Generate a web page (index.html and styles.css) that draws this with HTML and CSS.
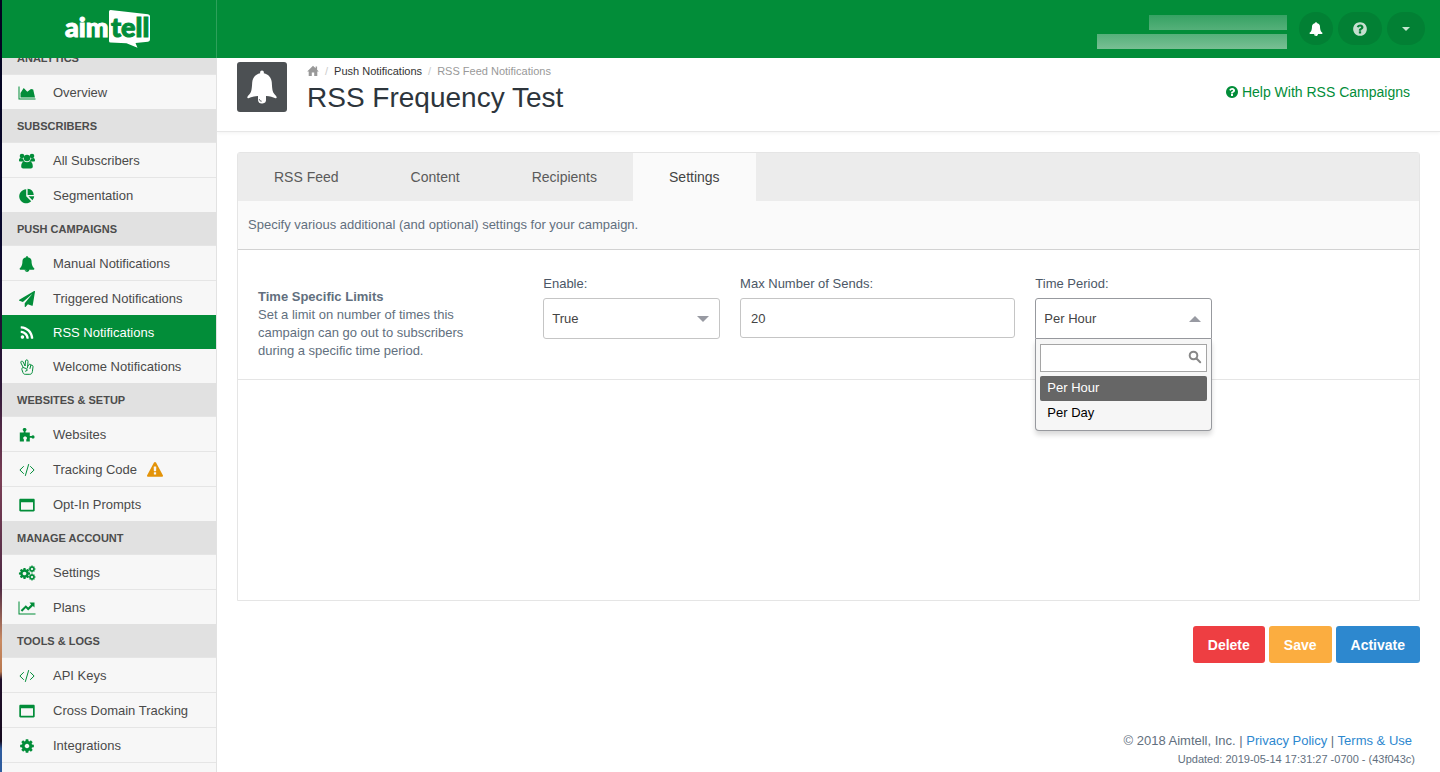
FILE: index.html
```html
<!DOCTYPE html>
<html lang="en">
<head>
<meta charset="utf-8">
<title>RSS Frequency Test - Aimtell</title>
<link rel="stylesheet" href="styles.css">
</head>
<body>
<svg class="sprite" aria-hidden="true">
  <symbol id="bell" viewBox="0 0 1792 1792"><path d="M912 1696q0-16-16-16-59 0-101.500-42.500t-42.500-101.500q0-16-16-16t-16 16q0 73 51.500 124.500t124.500 51.500q16 0 16-16zm816-288q0 52-38 90t-90 38h-448q0 106-75 181t-181 75-181-75-75-181h-448q-52 0-90-38t-38-90q50-42 91-88t85-119.500 74.500-158.500 50-206 19.500-260q0-152 117-282.500t307-158.500q-8-19-8-39 0-40 28-68t68-28 68 28 28 68q0 20-8 39 190 28 307 158.500t117 282.500q0 139 19.500 260t50 206 74.500 158.500 85 119.500 91 88z"/></symbol>
  <symbol id="bell-tall" viewBox="0 0 32 34"><path d="M16 .5c1.100 0 1.900.8 1.900 1.900l-.1.800c4.700.9 7.700 4.400 8 9.300.3 5.600.6 8.600 2 10.800 1.200 1.900 2.900 2.900 2.900 4.300 0 .5-.5.900-1.200.6-2.700-1.200-5.500-1.900-9.200-2.200-1.300 0-1.900.6-2.200 1.200-.7-1-3.500-1-4.200 0-.3-.6-.9-1.200-2.200-1.200-3.700.3-6.500 1-9.200 2.200-.7.300-1.200-.1-1.200-.6 0-1.400 1.700-2.400 2.900-4.300 1.400-2.200 1.700-5.200 2-10.800.3-4.900 3.300-8.400 8-9.300l-.1-.8C14.100 1.300 14.900.5 16 .5z"/><path d="M12 26h8v3a4 4 0 0 1-8 1z"/><path class="notch" d="M13.300 29.200c.2 1.300 1.100 2 2.300 2"/></symbol>
  <symbol id="rss" viewBox="0 0 1792 1792"><path d="M576 1344q0 80-56 136t-136 56-136-56-56-136 56-136 136-56 136 56 56 136zm512 123q2 28-17 48-18 21-47 21h-135q-25 0-43-16.500t-20-41.500q-22-229-184.500-391.500t-391.500-184.500q-25-2-41.500-20t-16.500-43v-135q0-29 21-47 17-17 43-17h5q160 13 306 80.500t259 181.500q114 113 181.500 259t80.500 306zm512 2q2 27-18 47-18 20-46 20h-143q-26 0-44.500-17.500t-19.500-42.500q-12-215-101-408.500t-231.500-336-336-231.500-408.500-102q-25-1-42.500-19.500t-17.500-43.500v-143q0-28 20-46 18-18 44-18h3q262 13 501.500 120t425.500 294q187 186 294 425.500t120 501.500z"/></symbol>
  <symbol id="help" viewBox="0 0 1792 1792"><path d="M1024 1376v-192q0-14-9-23t-23-9h-192q-14 0-23 9t-9 23v192q0 14 9 23t23 9h192q14 0 23-9t9-23zm256-672q0-88-55.500-163t-138.500-116-170-41q-243 0-371 213-15 24 8 42l132 100q7 6 19 6 16 0 25-12 53-68 86-92 34-24 86-24 48 0 85.500 26t37.500 59q0 38-20 61t-68 45q-63 28-115.500 86.500t-52.500 125.500v36q0 14 9 23t23 9h192q14 0 23-9t9-23q0-19 21.500-49.500t54.500-49.500q32-18 49-28.500t46-35 44.500-48 28-60.500 12.500-81zm384 192q0 209-103 385.500t-279.500 279.500-385.500 103-385.500-103-279.500-279.500-103-385.500 103-385.500 279.500-279.500 385.500-103 385.500 103 279.500 279.500 103 385.500z"/></symbol>
  <symbol id="warning" viewBox="0 0 1792 1792"><path d="M1024 1375v-190q0-14-9.500-23.500t-22.500-9.500h-192q-13 0-22.500 9.500t-9.500 23.500v190q0 14 9.500 23.500t22.500 9.500h192q13 0 22.500-9.500t9.500-23.500zm-2-374l18-459q0-12-10-19-13-11-24-11h-220q-11 0-24 11-10 7-10 21l17 457q0 10 10 16.500t24 6.500h185q14 0 23.500-6.500t10.500-16.500zm-14-934l768 1408q35 63-2 126-17 29-46.500 46t-63.500 17h-1536q-34 0-63.500-17t-46.500-46q-37-63-2-126l768-1408q17-31 47-49t65-18 65 18 47 49z"/></symbol>
  <symbol id="cog" viewBox="0 0 1792 1792"><path d="M1152 896q0-106-75-181t-181-75-181 75-75 181 75 181 181 75 181-75 75-181zm512-109v222q0 12-8 23t-20 13l-185 28q-19 54-39 91 35 50 107 138 10 12 10 25t-9 23q-27 37-99 108t-94 71q-12 0-26-9l-138-108q-44 23-91 38-16 136-29 186-7 28-36 28h-222q-14 0-24.500-8.500t-11.500-21.500l-28-184q-49-16-90-37l-141 107q-10 9-25 9-14 0-25-11-126-114-165-168-7-10-7-23 0-12 8-23 15-21 51-66.500t54-70.500q-27-50-41-99l-183-27q-13-2-21-12.500t-8-23.500v-222q0-12 8-23t19-13l186-28q14-46 39-92-40-57-107-138-10-12-10-24 0-10 9-23 26-36 98.500-107.500t94.500-71.500q13 0 26 10l138 107q44-23 91-38 16-136 29-186 7-28 36-28h222q14 0 24.500 8.500t11.500 21.500l28 184q49 16 90 37l142-107q9-9 24-9 13 0 25 10 129 119 165 170 7 8 7 22 0 12-8 23-15 21-51 66.500t-54 70.500q26 50 41 98l183 28q13 2 21 12.500t8 23.500z"/></symbol>
  <symbol id="plane" viewBox="0 0 1792 1792"><path d="M1764 11q33 24 27 64l-256 1536q-5 29-32 45-14 8-31 8-11 0-24-5l-453-185-242 295q-18 23-49 23-13 0-22-4-19-7-30.500-23.500t-11.500-36.500v-349l864-1059-1069 925-395-162q-37-14-40-55-2-40 32-59l1664-960q15-9 32-9 20 0 36 11z"/></symbol>
  <symbol id="search" viewBox="0 0 14 14"><circle class="stroke stroke-2" cx="5.500" cy="5.500" r="3.800"/><path class="stroke stroke-2" d="M8.500 8.500l3.700 3.700"/></symbol>
  <symbol id="area" viewBox="0 0 18 16"><path d="M.5 1.500h1v12h16v1H.5zM2.500 12.500V8l3.200-5 3.600 3.700L13 4l2.200.5 1.800 8z"/></symbol>
  <symbol id="line" viewBox="0 0 18 16"><path d="M.5 1.500h1v12h16v1H.5z"/><path d="M11.500 2.500h5v5l-1.600-1.600-4.700 4.600-2.400-2.400-3.600 3.700-1.500-1.500 5.100-5.100 2.400 2.400 2.900-3.200z"/></symbol>
  <symbol id="users" viewBox="0 0 16 16"><circle cx="3" cy="3" r="2.300"/><circle cx="13" cy="3" r="2.300"/><circle cx="8" cy="5" r="3.200"/><path d="M0 7.500C0 6 .6 5 1.500 5l2.700.6c.1 1.200.5 2 1.300 2.900H1.200C.4 8.500 0 8.200 0 7.500zM16 7.500C16 6 15.400 5 14.500 5l-2.700.6c-.1 1.200-.5 2-1.300 2.900h4.300c.8 0 1.200-.3 1.200-1zM2.200 13.500c0-2.900.9-5 3.300-5 1.600 1 3.400 1 5 0 2.400 0 3.300 2.100 3.300 5 0 1.300-.8 2-2 2H4.200c-1.200 0-2-.7-2-2z"/></symbol>
  <symbol id="pie" viewBox="0 0 16 16"><path d="M7.200 1.300v7l5 4.900A7 7 0 1 1 7.200 1.300z"/><path d="M8.600.8a6.800 6.800 0 0 1 6.200 6.200H8.600zM9.500 8.200h5.700a6.500 6.500 0 0 1-1.800 4z"/></symbol>
  <symbol id="peace" viewBox="0 0 16 16"><path class="stroke" d="M4.300 8.600L1.900 3.900C1.300 2.200 3.400 1.400 4.100 2.900l2 4.100L6.500 1.900c.2-1.500 2.600-1.300 2.500.3l-.3 5.100 1.500-1.900c.8-.5 1.700 0 1.700.8 1.400-.3 2.300.5 2.100 1.700L13.400 12.500c-.3 1.900-1.100 2.800-2.600 2.800H6.200c-1.200 0-1.900-.7-2.200-1.600L2.900 10.600C2.600 9.300 3.200 8.600 4.300 8.600l3.100 1 .9 1.700-1.800.9M8.700 7.300l-.4 1.800M11.800 6.300l-.8 3.200"/></symbol>
  <symbol id="puzzle" viewBox="0 0 16 16"><path d="M.8 5.500h3.900V4.200C4 3.700 3.700 3.200 3.700 2.500 3.700 1.500 4.500.9 5.600.9s1.900.6 1.900 1.600c0 .7-.3 1.200-1 1.700v1.300h4.300v3.600h1.700c.4-.6.900-.9 1.500-.9 1 0 1.500.8 1.500 1.700s-.5 1.700-1.500 1.700c-.6 0-1.100-.3-1.500-.9h-1.700v3.700H7.300v-2c.5-.4.700-.9.700-1.400 0-1-.8-1.600-1.900-1.600s-1.900.6-1.900 1.600c0 .5.200 1 .7 1.400v2H.8z"/></symbol>
  <symbol id="code" viewBox="0 0 16 16"><path class="stroke" d="M4.500 4.500L.9 8l3.600 3.500M11.500 4.500L15.100 8l-3.600 3.500M9.600 2.500l-3.200 11"/></symbol>
  <symbol id="window" viewBox="0 0 16 16"><path fill-rule="evenodd" d="M1.500 1.700h13c.8 0 1.200.5 1.200 1.200v10.400c0 .7-.4 1.200-1.200 1.200h-13c-.7 0-1.200-.5-1.200-1.200V2.900c0-.7.500-1.200 1.200-1.200zM2 5.200v7.600h12V5.200z"/></symbol>
  <symbol id="cogs" viewBox="0 0 18 16"><use href="#cog" x="0" y="2" width="13" height="13"/><use href="#cog" x="10" y="0" width="8" height="8"/><use href="#cog" x="10" y="8" width="8" height="8"/></symbol>
  <symbol id="home" viewBox="0 0 12 12"><path d="M6 .8l2.600 2.500V1.500h1.500v3.200l1.700 1.700h-1.500V11H7.200V7.600H4.800V11H1.700V6.400H.2z"/></symbol>
</svg>

<div class="edge"></div>
<div class="app">
  <header class="topbar">
    <a class="brand" href="#" aria-label="aimtell">
      <svg class="logo" viewBox="0 0 90 44">
        <path class="bubble" d="M45 2.500Q45 1 46.500 1L84 5.300q2 .3 2 2V30.500q0 2-2 2.200L71.500 34l2 4.700L62.500 34.200 46.500 33.500Q45 33.500 45 32z"/>
        <text class="word" x="1" y="28">aim</text>
        <text class="word word-in" x="47" y="28">tell</text>
      </svg>
    </a>
    <div class="account">
      <div class="redacted"><span class="bar bar-short"></span><span class="bar"></span></div>
      <button class="pill" aria-label="Notifications"><svg class="icon"><use href="#bell"/></svg></button>
      <button class="pill pill-wide" aria-label="Help"><svg class="icon icon-16"><use href="#help"/></svg></button>
      <button class="pill pill-menu" aria-label="Account menu"><span class="caret"></span></button>
    </div>
  </header>
  <div class="body">
    <nav class="sidebar">
      <div class="menu">
        <h2 class="group">ANALYTICS</h2>
        <a class="item" href="#"><svg class="icon icon-18"><use href="#area"/></svg>Overview</a>
        <h2 class="group">SUBSCRIBERS</h2>
        <a class="item" href="#"><svg class="icon icon-18"><use href="#users"/></svg>All Subscribers</a>
        <a class="item" href="#"><svg class="icon icon-18"><use href="#pie"/></svg>Segmentation</a>
        <h2 class="group">PUSH CAMPAIGNS</h2>
        <a class="item" href="#"><svg class="icon icon-18"><use href="#bell"/></svg>Manual Notifications</a>
        <a class="item" href="#"><svg class="icon icon-18"><use href="#plane"/></svg>Triggered Notifications</a>
        <a class="item active" href="#"><svg class="icon icon-18"><use href="#rss"/></svg>RSS Notifications</a>
        <a class="item after-active" href="#"><svg class="icon icon-18"><use href="#peace"/></svg>Welcome Notifications</a>
        <h2 class="group">WEBSITES &amp; SETUP</h2>
        <a class="item" href="#"><svg class="icon icon-18"><use href="#puzzle"/></svg>Websites</a>
        <a class="item" href="#"><svg class="icon icon-18"><use href="#code"/></svg>Tracking Code<svg class="icon icon-16 warn"><use href="#warning"/></svg></a>
        <a class="item" href="#"><svg class="icon icon-18"><use href="#window"/></svg>Opt-In Prompts</a>
        <h2 class="group">MANAGE ACCOUNT</h2>
        <a class="item" href="#"><svg class="icon icon-18"><use href="#cogs"/></svg>Settings</a>
        <a class="item" href="#"><svg class="icon icon-18"><use href="#line"/></svg>Plans</a>
        <h2 class="group">TOOLS &amp; LOGS</h2>
        <a class="item" href="#"><svg class="icon icon-18"><use href="#code"/></svg>API Keys</a>
        <a class="item" href="#"><svg class="icon icon-18"><use href="#window"/></svg>Cross Domain Tracking</a>
        <a class="item" href="#"><svg class="icon icon-18"><use href="#cog"/></svg>Integrations</a>
        <div class="item"></div>
      </div>
    </nav>
    <main class="main">
      <div class="page-head">
        <div class="badge"><svg class="icon-34"><use href="#bell-tall"/></svg></div>
        <div class="titles">
          <div class="crumbs">
            <a class="home" href="#" aria-label="Home"><svg class="icon-12"><use href="#home"/></svg></a>
            <span class="sep">/</span><a class="crumb" href="#">Push Notifications</a>
            <span class="sep">/</span><span class="here">RSS Feed Notifications</span>
          </div>
          <h1 class="title">RSS Frequency Test</h1>
        </div>
        <a class="help" href="#"><svg class="icon"><use href="#help"/></svg>Help With RSS Campaigns</a>
      </div>
      <div class="content">
        <section class="card">
          <div class="tabs" role="tablist">
            <button class="tab" role="tab">RSS Feed</button>
            <button class="tab" role="tab">Content</button>
            <button class="tab" role="tab">Recipients</button>
            <button class="tab selected" role="tab" aria-selected="true">Settings</button>
          </div>
          <p class="intro">Specify various additional (and optional) settings for your campaign.</p>
          <div class="settings">
            <div class="about"><strong>Time Specific Limits</strong><br>Set a limit on number of times this campaign can go out to subscribers during a specific time period.</div>
            <div class="field">
              <label for="enable">Enable:</label>
              <div class="picker"><select class="control select" id="enable"><option>True</option><option>False</option></select></div>
            </div>
            <div class="field">
              <label for="max">Max Number of Sends:</label>
              <input class="control text" id="max" type="text" value="20">
            </div>
            <div class="field">
              <label for="period">Time Period:</label>
              <div class="picker open">
                <select class="control select" id="period"><option>Per Hour</option><option>Per Day</option></select>
                <div class="drop">
                  <div class="find"><input class="find-input" type="text" aria-label="Search time periods"><svg class="icon find-icon"><use href="#search"/></svg></div>
                  <ul class="options" role="listbox" aria-label="Time Period">
                    <li class="option current" role="option" aria-selected="true">Per Hour</li>
                    <li class="option" role="option">Per Day</li>
                  </ul>
                </div>
              </div>
            </div>
          </div>
        </section>
        <div class="actions">
          <button class="btn red">Delete</button>
          <button class="btn orange">Save</button>
          <button class="btn blue">Activate</button>
        </div>
      </div>
      <footer class="footer">
        <div class="legal">© 2018 Aimtell, Inc. | <a href="#">Privacy Policy</a> | <a href="#">Terms &amp; Use</a></div>
        <div class="updated">Updated: 2019-05-14 17:31:27 -0700 - (43f043c)</div>
      </footer>
    </main>
  </div>
</div>
</body>
</html>
```
FILE: styles.css
```css
* { box-sizing: border-box; }
body {
  margin: 0;
  height: 100vh;
  display: flex;
  overflow: hidden;
  font: 13px/18px "Liberation Sans", Arial, sans-serif;
  color: #626f7e;
  background: #fff;
}
a { text-decoration: none; color: #2d88cf; }
button, input, select { font: inherit; }
svg { fill: currentColor; flex: none; }
.sprite { position: absolute; width: 0; height: 0; }
.stroke { fill: none; stroke: currentColor; stroke-linecap: round; stroke-linejoin: round; }
.stroke-2 { stroke-width: 2px; }
.notch { fill: none; stroke: #4c5053; }
.icon { width: 14px; height: 14px; }
.icon-12 { width: 12px; height: 12px; }
.icon-16 { width: 16px; height: 16px; }
.icon-18 { width: 18px; height: 16px; }
.icon-34 { width: 32px; height: 34px; }

.edge {
  width: 2px;
  background: linear-gradient(#03031f 0%, #08082c 30%, #2e1838 50%, #7b3f56 62%, #4e2a45 76%, #c98a62 83%, #b87850 87%, #21102b 88%, #150a1e 96%, #2f5c9e 97%);
}
.app { flex: 1; min-width: 0; display: flex; flex-direction: column; }

/* Top bar */
.topbar { height: 58px; flex: none; display: flex; justify-content: space-between; background: #028d39; }
.brand { width: 215px; display: flex; justify-content: center; border-right: 1px solid #2ea05b; }
.logo { width: 90px; height: 44px; margin-top: 9px; }
.bubble { fill: #fff; }
.word { font: 900 27px Lato, sans-serif; fill: #fff; stroke: #fff; stroke-width: 1px; }
.word-in { fill: #028d39; stroke: #028d39; }
.account { display: flex; align-items: flex-start; gap: 5px; padding: 12px 15px 0 0; }
.redacted { width: 190px; margin: 3px 7px 0 0; display: flex; flex-direction: column; align-items: flex-end; gap: 4px; }
.bar { width: 100%; height: 15px; background: linear-gradient(#55b07a, #78bf94); }
.bar-short { width: 138px; background: linear-gradient(#36a263, #55b07a); }
.pill {
  width: 34px; height: 33px; padding: 0; border: 0; border-radius: 17px;
  display: flex; align-items: center; justify-content: center;
  background: #028034; color: #fff;
}
.pill-wide { width: 44px; color: #c5dfcf; }
.pill-menu { width: 38px; }
.caret { border: 4px solid transparent; border-top-color: #c5e5d0; border-bottom: 0; }

/* Sidebar */
.body { flex: 1; min-height: 0; display: flex; }
.sidebar { width: 215px; flex: none; overflow: hidden; background: #f7f7f7; border-right: 1px solid #e2e2e2; }
.menu { margin-top: -17px; }
.group { height: 33px; margin: 0; padding-left: 15px; font-size: 11px; line-height: 34px; color: #4c4c4c; background: #e1e1e1; }
.item {
  height: 35px; padding: 2px 0 0 16px; display: flex; align-items: center;
  border-top: 1px solid #e5e5e5; color: #4a4a4a;
}
.item > .icon-18 { margin-right: 17px; color: #028d39; }
.active, .after-active { height: 34px; border-top: 0; }
.active { background: #028d39; color: #fff; margin-right: -1px; }
.active > .icon-18 { color: #fff; }
.warn { margin-left: 10px; color: #e39308; }

/* Page head */
.main { flex: 1; min-width: 0; overflow: hidden; }
.page-head {
  height: 74px; padding: 4px 30px 0 20px; display: flex; align-items: flex-start;
  border-bottom: 1px solid #e7e7e7; box-shadow: 0 1px 4px #f2f2f2;
}
.badge { width: 50px; height: 50px; border-radius: 3px; background: #4c5053; color: #fff; display: flex; align-items: center; justify-content: center; }
.titles { flex: 1; padding-left: 20px; }
.crumbs { display: flex; align-items: center; gap: 6px; font-size: 11px; color: #999; }
.home { display: flex; color: #999; }
.sep { color: #ccc; }
.crumb { color: #333; }
.title { margin: 0; font-size: 28px; line-height: 36px; font-weight: 400; color: #2d353c; }
.help { display: flex; align-items: center; gap: 3px; padding-top: 21px; font-size: 14px; color: #028d39; }

/* Campaign card */
.content { padding: 20px 20px 0; }
.card { min-height: 449px; border: 1px solid #e5e5e5; border-radius: 3px 3px 0 0; }
.tabs { display: flex; background: #ececec; }
.tab { height: 48px; padding: 0 36px; border: 0; background: none; font-size: 14px; color: #5a5a5a; }
.selected { background: #fafafa; color: #444; }
.intro { margin: 0; padding: 15px 10px; background: #fafafa; border-bottom: 1px solid #d2d2d2; }
.settings { display: grid; grid-template-columns: 3fr 2fr 3fr 2fr 2fr; padding: 25px 0 19px; border-bottom: 1px solid #e5e5e5; }
.about { padding: 13px 40px 0 20px; }
.field { padding: 0 10px; }
.field label { display: block; margin-bottom: 5px; color: #4b5766; }
.control { display: block; width: 100%; border: 1px solid #c5c5c5; border-radius: 3px; background: #fff; color: #444; outline: 0; }
.text { height: 40px; padding: 0 10px; }
.select { height: 41px; padding: 0 8px; appearance: none; }
.picker { position: relative; }
.picker::after { content: ""; position: absolute; right: 11px; top: 18px; border: 6px solid transparent; border-top: 6px solid #989aa2; border-bottom: 0; }
.open::after { border-top: 0; border-bottom: 6px solid #989aa2; }
.open .control { border-color: #97999e; border-radius: 3px 3px 0 0; }
.drop {
  position: absolute; top: 100%; left: 0; right: 0; padding: 5px 4px 4px;
  background: #f6f6f6; border: 1px solid #97999e; border-top: 0; border-radius: 0 0 4px 4px;
  box-shadow: 0 4px 5px rgba(0, 0, 0, 0.15);
}
.find { position: relative; }
.find-input { display: block; width: 100%; height: 28px; padding: 0 24px 0 6px; border: 1px solid #a5a5a5; background: #fff; outline: 0; }
.find-icon { position: absolute; right: 5px; top: 6px; color: #888; }
.options { margin: 4px 0 0; padding: 0; list-style: none; }
.option { padding: 3px 7px 4px; border-radius: 2px; color: #000; }
.current { background: #666; color: #fff; }

/* Actions and footer */
.actions { display: flex; justify-content: flex-end; gap: 4px; padding-top: 25px; }
.btn { height: 37px; padding: 0 15px; border: 0; border-radius: 3px; font-size: 14px; font-weight: 700; color: #fff; }
.red { background: #ee3e42; }
.orange { background: #fbad40; }
.blue { background: #2d88cf; }
.footer { padding: 69px 25px 0 20px; text-align: right; }
.legal { padding-right: 3px; }
.updated { font-size: 11px; }
```
